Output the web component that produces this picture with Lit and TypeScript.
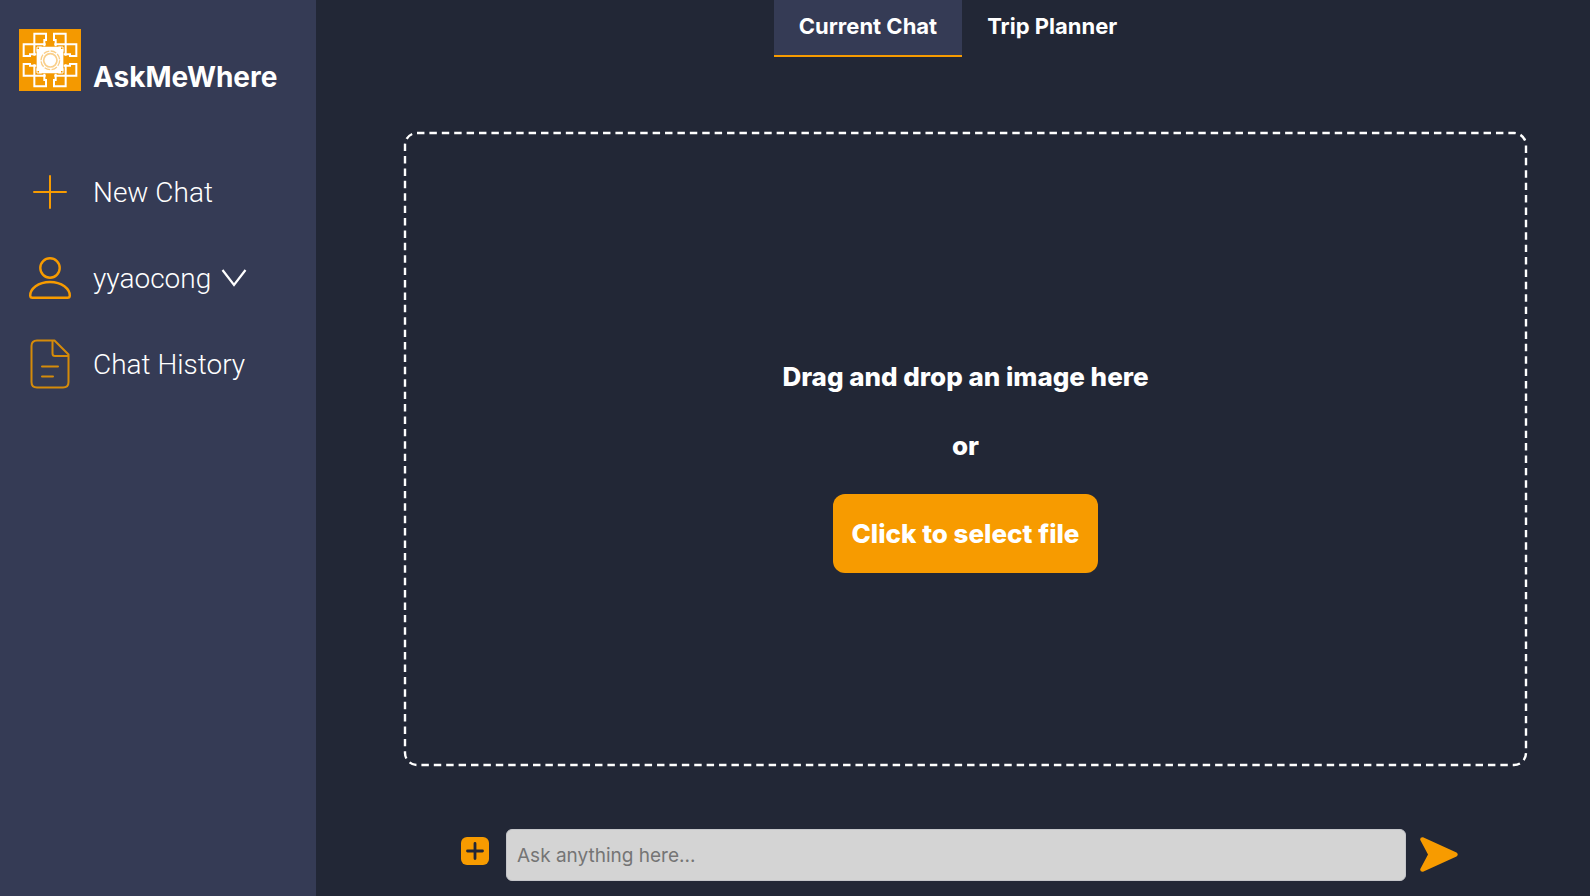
import { LitElement, html, css, svg } from "lit";
import { customElement, state } from "lit/decorators.js";

const quadrant = svg`
  <path d="M46 80V14H81V33H76V52" />
  <path d="M80 46H14V81H33V76H52" />
  <path d="M54 68V54H68" stroke-width="3" />
`;

@customElement("brand-mark")
export class BrandMark extends LitElement {
  static styles = css`
    :host { display: block; }
    svg { display: block; width: 100%; height: auto; }
  `;
  render() {
    return html`<svg viewBox="0 0 186 186" fill="none" stroke="#fff" stroke-width="6" aria-hidden="true">
      <rect width="186" height="186" fill="#f49900" stroke="none" />
      <g>${quadrant}</g>
      <g transform="translate(186 0) scale(-1 1)">${quadrant}</g>
      <g transform="translate(0 186) scale(1 -1)">${quadrant}</g>
      <g transform="translate(186 186) scale(-1 -1)">${quadrant}</g>
      <path d="M60 60V53H126V60H133V126H126V133H60V126H53V60Z" fill="#fff" stroke="none" />
      <circle cx="94" cy="94" r="28" stroke="#f9cd85" stroke-width="4" stroke-dasharray="18 4" />
      <circle cx="94" cy="94" r="20" stroke="#f9cf8a" stroke-width="5" />
    </svg>`;
  }
}

@customElement("app-root")
export class AppRoot extends LitElement {
  @state() private tab = 0;

  static styles = css`
    :host {
      display: block;
      font-family: Inter, "Open Sans", sans-serif;
      color: #fff;
    }
    *, *::before, *::after { box-sizing: border-box; }
    button { font: inherit; color: inherit; background: none; border: 0; padding: 0; cursor: pointer; }
    svg { display: block; }
    .page { display: flex; min-height: 100vh; background: #222736; }
    .sidebar { flex: 0 0 316px; background: #353b55; padding: 29px 19px; }
    .brand { display: grid; grid-template-columns: 62px 1fr; column-gap: 12px; align-items: end; }
    .brand h1 { margin: 0; font-size: 28px; line-height: 28px; font-weight: 700; }
    .nav { display: grid; margin-top: 59px; }
    .item {
      display: grid; grid-template-columns: 62px 1fr; column-gap: 12px; align-items: center;
      justify-items: start; height: 86px; font-family: Roboto, sans-serif; font-size: 28px; line-height: 36px;
      font-weight: 300; text-align: left;
    }
    .item > svg { justify-self: center; margin-bottom: 3px; }
    .label { display: flex; align-items: center; gap: 10px; }
    .label svg { margin-bottom: 3px; }
    .main { flex: 1; min-width: 0; display: flex; flex-direction: column; }
    .tabs { display: flex; justify-content: center; padding-left: 10px; }
    .tab { height: 57px; padding: 0 25px 3px; font-size: 22px; line-height: 26px; font-weight: 700; border-bottom: 2px solid transparent; }
    .tab.on { background: #353b55; border-color: #f79b00; }
    .drop {
      position: relative; flex: 1; margin: 75px 63px 0 88px; padding-top: 35px; display: flex; flex-direction: column;
      align-items: center; justify-content: center; font-size: 26px; line-height: 34px; font-weight: 800;
    }
    .outline { position: absolute; inset: 0; width: 100%; height: 100%; pointer-events: none; overflow: visible; }
    .outline rect { x: 1px; y: 1px; width: calc(100% - 2px); height: calc(100% - 2px); }
    .drop p { margin: 0 0 35px; }
    .drop p + p { margin-bottom: 31px; }
    .pick { height: 79px; padding: 0 19px; border-radius: 12px; background: #f79b00; }
    .composer { display: flex; align-items: center; gap: 14px; margin: 63px 132px 15px 144px; }
    .composer input {
      flex: 1; min-width: 0; height: 52px; padding: 0 10px; font: inherit; font-size: 19px; color: #222736;
      background: #d4d4d4; border: 1px solid #c4c5c9; border-radius: 6px;
    }
    .composer input::placeholder { color: #757575; opacity: 1; }
  `;

  render() {
    return html`<div class="page">
      <aside class="sidebar">
        <div class="brand"><brand-mark></brand-mark><h1>AskMeWhere</h1></div>
        <nav class="nav">
          <button class="item">
            <svg width="34" height="34" viewBox="0 0 34 34" fill="none" stroke="#f79b00" stroke-width="2" stroke-linecap="round"><path d="M17 1v32M1 17h32" /></svg>
            <span class="label">New Chat</span>
          </button>
          <button class="item">
            <svg width="42" height="42" viewBox="0 0 42 42" fill="none" stroke="#f79b00" stroke-width="2.4" stroke-linejoin="round"><circle cx="21" cy="11" r="9.7" /><path d="M21 25C9 25 1.2 32 1.2 38.500Q1.2 40.800 3.500 40.800H38.500Q40.800 40.800 40.800 38.500C40.800 32 33 25 21 25Z" /></svg>
            <span class="label">yyaocong
              <svg width="26" height="18" viewBox="0 0 26 18" fill="none" stroke="#fff" stroke-width="2.2"><path d="M1.500 1l11.500 15L24.500 1" /></svg>
            </span>
          </button>
          <button class="item">
            <svg width="40" height="50" viewBox="0 0 40 50" fill="none" stroke="#d58b0a" stroke-width="2" stroke-linejoin="round" stroke-linecap="round"><path d="M24.500 1.500H7Q1.500 1.500 1.500 7V43Q1.500 48.500 7 48.500H33Q38.500 48.500 38.500 43V15.500ZM22.500 2V14.500Q22.500 17 25 17H38M12 27.500H28M12 37.500H23" /></svg>
            <span class="label">Chat History</span>
          </button>
        </nav>
      </aside>
      <main class="main">
        <nav class="tabs">
          ${["Current Chat", "Trip Planner"].map((name, i) => html`<button class="tab ${this.tab === i ? "on" : ""}" @click=${() => (this.tab = i)}>${name}</button>`)}
        </nav>
        <section class="drop">
          <svg class="outline" fill="none" stroke="#fff" stroke-width="2.4" aria-hidden="true"><rect rx="12" pathLength="2810" stroke-dasharray="6 4" /></svg>
          <p>Drag and drop an image here</p>
          <p>or</p>
          <button class="pick">Click to select file</button>
        </section>
        <form class="composer" @submit=${(e: Event) => e.preventDefault()}>
          <button type="button" aria-label="Attach">
            <svg width="32" height="36" viewBox="0 0 32 36"><rect x="1" y="0" width="28" height="28" rx="6" fill="#f79b00" /><path d="M15 6.500V21.500M7.500 14H22.500" stroke="#222736" stroke-width="2.8" stroke-linecap="round" /></svg>
          </button>
          <input type="text" aria-label="Message" placeholder="Ask anything here..." />
          <button type="submit" aria-label="Send">
            <svg width="38" height="36" viewBox="0 0 38 36" fill="#f79b00"><path d="M3 .3L36.500 15.500Q39 17.500 36.500 19.500L3 34.800Q-.3 35 .3 32L8 17.500L.3 3Q-.3 0 3 .3Z" /></svg>
          </button>
        </form>
      </main>
    </div>`;
  }
}
